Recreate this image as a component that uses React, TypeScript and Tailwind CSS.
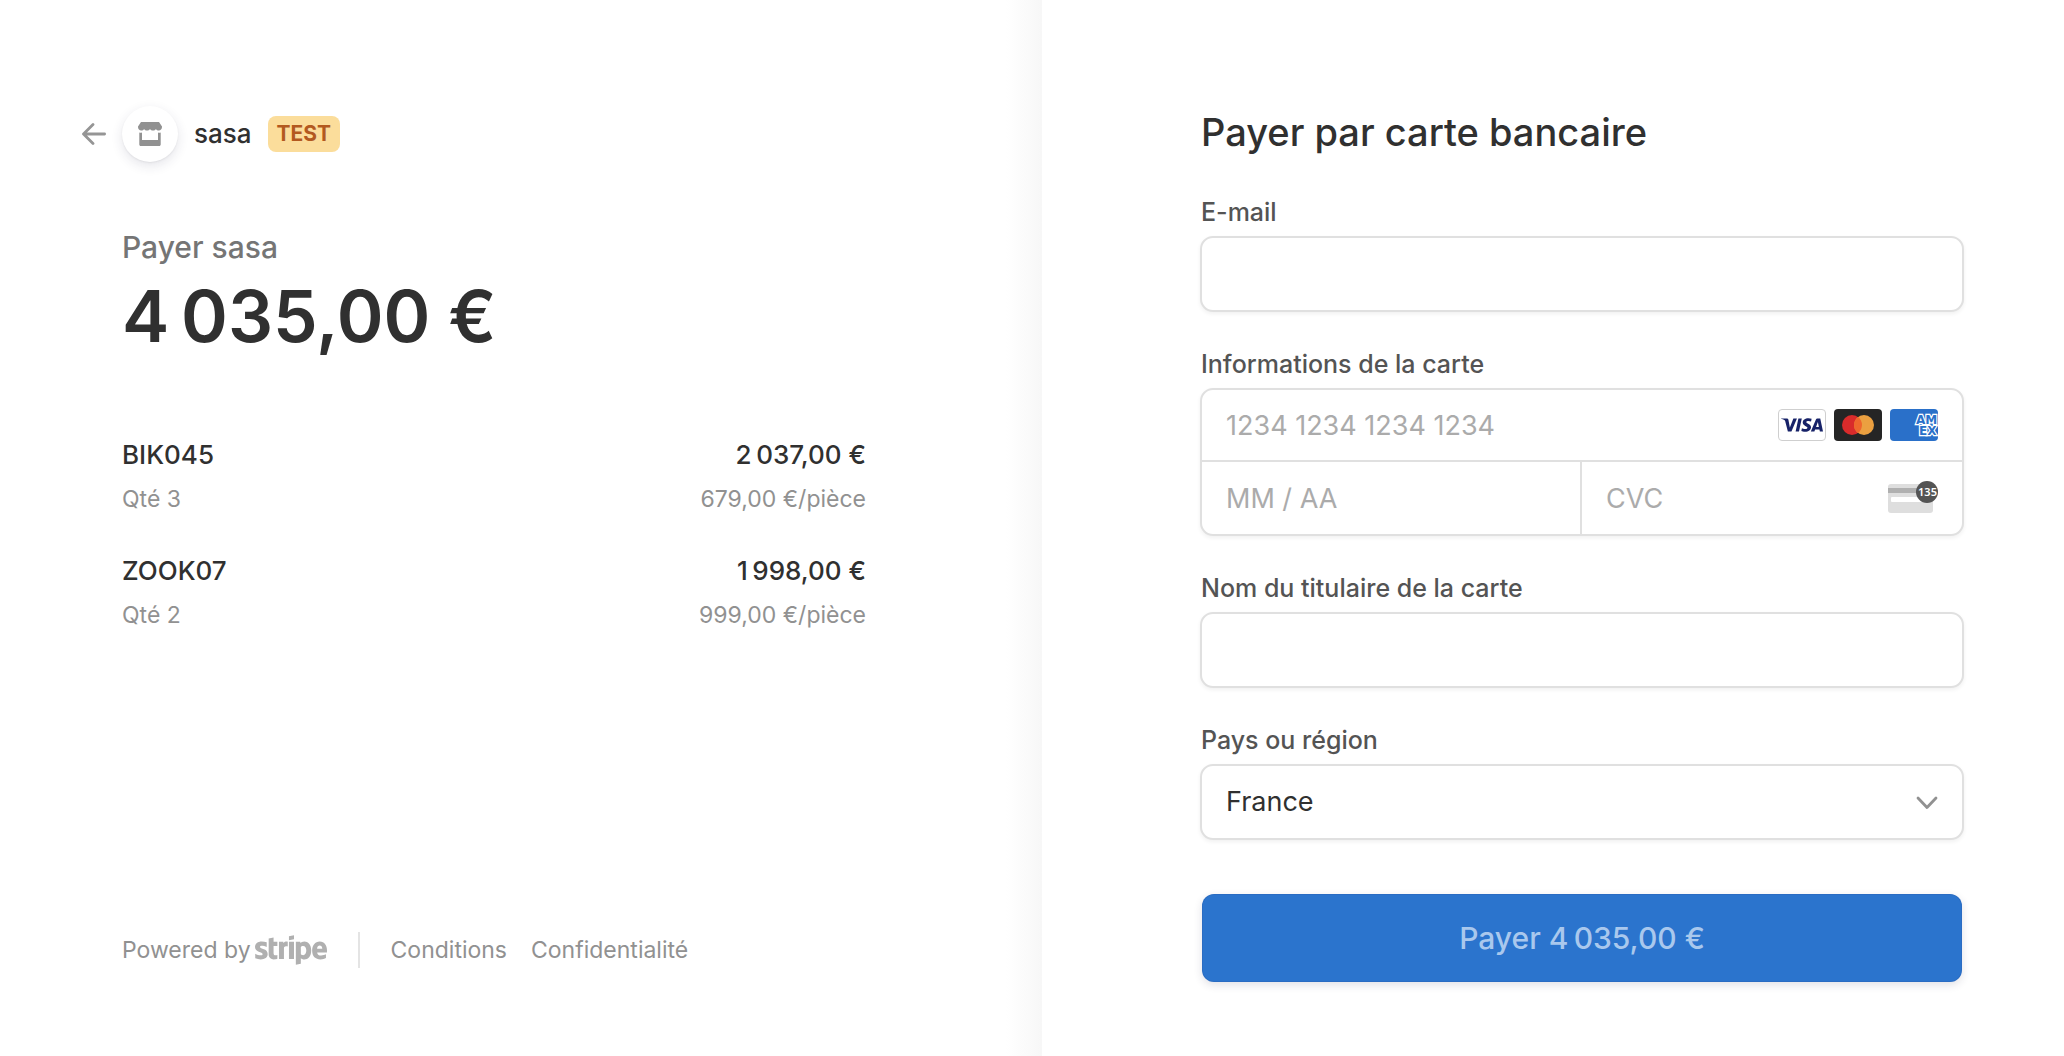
import React from "react";
import { FaStripe } from "react-icons/fa";
import { SiVisa } from "react-icons/si";

const items = [
  { name: "BIK045", qty: "Qté 3", total: "2\u202f037,00\u00a0€", unit: "679,00\u00a0€/pièce" },
  { name: "ZOOK07", qty: "Qté 2", total: "1\u202f998,00\u00a0€", unit: "999,00\u00a0€/pièce" },
];

const total = "4\u202f035,00\u00a0€";

const labelClass = "block pl-px text-[25px] leading-9 font-medium text-[#545454]";
const boxClass =
  "w-full rounded-[13px] border-2 border-[#e0e0e0] bg-white shadow-[0_2px_4px_rgba(0,0,0,0.06)]";
const inputClass =
  "h-[72px] w-full min-w-0 rounded-[11px] bg-transparent px-6 text-[27px] text-[#303030] placeholder:text-[#ababab] focus:outline-none";
const cardNumberClass =
  "h-[70px] w-full min-w-0 rounded-[11px] bg-transparent px-6 text-[27px] text-[#303030] placeholder:text-[#ababab] focus:outline-none";

function StoreIcon() {
  return (
    <svg viewBox="0 0 24 24" className="size-6" fill="#919191" aria-hidden="true">
      <path d="M3 0h18l3 4.600c.1 2.400-1.300 4-3.200 4-1.200 0-2.200-.6-2.900-1.600-.6 1-1.700 1.600-2.900 1.600S12.700 8 12 7c-.7 1-1.800 1.600-3 1.600S6.700 8 6.100 7c-.7 1-1.700 1.600-2.900 1.600C1.300 8.600-.1 7 0 4.600z" />
      <path d="M1.300 10.600c1.100.3 1.800.3 2.700 0V18h16v-7.400c.9.3 1.800.3 2.700 0V22.500c0 .9-.6 1.500-1.500 1.500H2.800c-.9 0-1.500-.6-1.500-1.500z" />
    </svg>
  );
}

function BackArrow() {
  return (
    <svg viewBox="0 0 24 22" className="h-[22px] w-6" fill="none" stroke="#959595" strokeWidth="2.800" strokeLinecap="round" strokeLinejoin="round" aria-hidden="true">
      <path d="M22.600 11H2M11 1.500L1.500 11L11 20.500" />
    </svg>
  );
}

function MastercardIcon() {
  return (
    <svg viewBox="0 0 48 32" className="h-8 w-12" role="img" aria-label="Mastercard">
      <rect width="48" height="32" rx="4" fill="#252525" />
      <circle cx="18" cy="16" r="10" fill="#d92b2b" />
      <circle cx="30" cy="16" r="10" fill="#eba040" />
      <path d="M24 8a10 10 0 0 1 0 16a10 10 0 0 1 0-16z" fill="#ee672d" />
    </svg>
  );
}

function AmexIcon() {
  return (
    <svg viewBox="0 0 48 32" className="h-8 w-12" role="img" aria-label="American Express">
      <defs>
        <clipPath id="amex-card">
          <rect width="48" height="32" rx="4" />
        </clipPath>
      </defs>
      <g clipPath="url(#amex-card)">
        <rect width="48" height="32" fill="#2a70c9" />
        <g fontFamily="DejaVu Sans, sans-serif" fontWeight="700" fontSize="12" fill="#2a70c9" stroke="#ffffff" strokeWidth="2.400" paintOrder="stroke">
          <text x="26" y="14.500">AM</text>
          <text x="29" y="25.500">EX</text>
        </g>
      </g>
    </svg>
  );
}

function CvcIcon() {
  return (
    <svg viewBox="0 0 50 34" className="h-[34px] w-[50px] shrink-0" aria-hidden="true">
      <rect y="4" width="45" height="29" rx="3" fill="#dedede" />
      <rect y="8" width="45" height="5" fill="#b0b0b0" />
      <rect x="3" y="17" width="38" height="5" rx="1" fill="#ffffff" />
      <circle cx="39" cy="12" r="11" fill="#545454" />
      <text x="39.500" y="16" textAnchor="middle" fontFamily="Noto Sans, sans-serif" fontWeight="600" fontSize="11" fill="#ffffff">135</text>
    </svg>
  );
}

function Summary() {
  return (
    <section className="flex flex-col bg-linear-to-l from-[#f7f7f7] to-white to-[36px] pt-[106px] pr-[176px] pb-[88px] pl-[82px]">
      <header className="flex items-center">
        <button type="button" aria-label="Retour" className="flex w-10 items-center">
          <BackArrow />
        </button>
        <span className="mr-4 flex size-14 items-center justify-center rounded-full bg-white shadow-[0_4px_12px_rgba(40,40,80,0.12),0_1px_2px_rgba(0,0,0,0.06)]">
          <StoreIcon />
        </span>
        <span className="mr-4 text-[26px] leading-9 font-medium text-[#303030]">sasa</span>
        <span className="rounded-lg bg-[#fbdd9b] px-[9px] text-[21px] leading-9 font-bold text-[#b3591f]">TEST</span>
      </header>

      <div className="flex grow flex-col pl-10">
        <h1 className="mt-16 text-[30px] leading-[42px] font-medium text-[#757575]">Payer sasa</h1>
        <p className="mt-1.5 text-[71px] leading-[84px] font-semibold text-[#303030]">{total}</p>

        <ul className="mt-[77px] flex flex-col gap-[34px]">
          {items.map((item) => (
            <li key={item.name}>
              <div className="flex justify-between text-[26px] leading-10 font-medium text-[#303030]">
                <span>{item.name}</span>
                <span>{item.total}</span>
              </div>
              <div className="mt-1 flex justify-between pt-0.5 text-[23px] leading-9 text-[#919191]">
                <span>{item.qty}</span>
                <span>{item.unit}</span>
              </div>
            </li>
          ))}
        </ul>

        <footer className="mt-auto flex items-center text-[23px] leading-9 text-[#919191]">
          <a href="#stripe" className="flex items-center gap-1">
            Powered by
            <FaStripe viewBox="0 123 640 266" className="h-[30px] w-[72px] text-[#b0b0b0]" aria-label="stripe" />
          </a>
          <span className="mx-[31px] h-9 w-0.5 bg-[#e4e4e4]" />
          <nav className="flex gap-6">
            <a href="#conditions">Conditions</a>
            <a href="#confidentialite">Confidentialité</a>
          </nav>
        </footer>
      </div>
    </section>
  );
}

function PaymentForm() {
  return (
    <form className="flex flex-col bg-white pt-[108px] pr-[100px] pb-[74px] pl-[158px]" onSubmit={(e) => e.preventDefault()}>
      <h2 className="mb-[38px] pl-px text-[38px] leading-[48px] font-medium text-[#303030]">Payer par carte bancaire</h2>

      <div className="flex flex-col gap-[34px]">
        <div className="flex flex-col gap-1.5">
          <label htmlFor="email" className={labelClass}>E-mail</label>
          <div className={boxClass}>
            <input id="email" type="email" className={inputClass} />
          </div>
        </div>

        <div className="flex flex-col gap-1.5">
          <label htmlFor="card" className={labelClass}>Informations de la carte</label>
          <div className={boxClass}>
            <div className="flex items-center border-b-2 border-[#e0e0e0] pr-6">
              <input id="card" inputMode="numeric" placeholder="1234 1234 1234 1234" className={cardNumberClass} />
              <div className="flex shrink-0 gap-2">
                <span className="flex h-8 w-12 items-center justify-center rounded border border-[#cfcfcf] bg-white">
                  <SiVisa viewBox="0 8 24 8" className="h-[14px] w-[42px] text-[#172268]" aria-label="Visa" />
                </span>
                <MastercardIcon />
                <AmexIcon />
              </div>
            </div>
            <div className="grid grid-cols-[189fr_191fr]">
              <input aria-label="Date d’expiration" placeholder="MM / AA" className={inputClass} />
              <div className="flex items-start border-l-2 border-[#e0e0e0] pr-6">
                <input aria-label="CVC" placeholder="CVC" className={inputClass} />
                <span className="mt-[18px]">
                  <CvcIcon />
                </span>
              </div>
            </div>
          </div>
        </div>

        <div className="flex flex-col gap-1.5">
          <label htmlFor="holder" className={labelClass}>Nom du titulaire de la carte</label>
          <div className={boxClass}>
            <input id="holder" type="text" className={inputClass} />
          </div>
        </div>

        <div className="flex flex-col gap-1.5">
          <label htmlFor="country" className={labelClass}>Pays ou région</label>
          <div className={boxClass + " relative"}>
            <select id="country" defaultValue="France" className={inputClass + " appearance-none"}>
              <option>France</option>
            </select>
            <svg viewBox="0 0 22 14" className="pointer-events-none absolute top-[30px] right-6 h-[14px] w-[22px]" fill="none" stroke="#919191" strokeWidth="2.800" strokeLinecap="round" strokeLinejoin="round" aria-hidden="true">
              <path d="M2 2L11 11.500L20 2" />
            </svg>
          </div>
        </div>
      </div>

      <button
        type="submit"
        className="mx-0.5 mt-[54px] h-[88px] rounded-xl bg-[#2b74cd] text-[30px] font-medium text-[#a9c8ed] shadow-[0_3px_8px_rgba(40,40,80,0.14),inset_0_0_0_1px_rgba(40,60,120,0.12)]"
      >
        Payer {total}
      </button>
    </form>
  );
}

export default function App() {
  return (
    <main className="grid min-h-screen grid-cols-[1042fr_1022fr] bg-white font-['Inter',sans-serif]">
      <Summary />
      <PaymentForm />
    </main>
  );
}
